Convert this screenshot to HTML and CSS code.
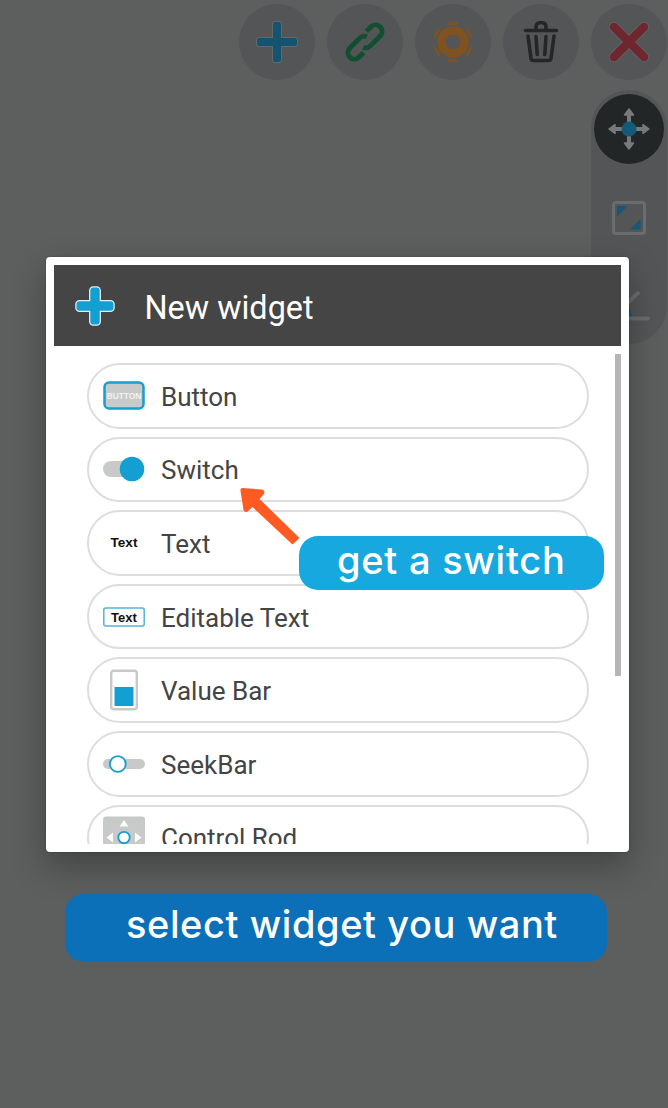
FILE: index.html
```html
<!DOCTYPE html>
<html lang="en">
<head>
<meta charset="utf-8">
<title>New widget</title>
<link rel="stylesheet" href="styles.css">
</head>
<body>
<main class="screen">
  <nav class="toolbar">
    <span class="tool"><svg width="44" height="44" viewBox="-22 -22 44 44"><path class="plus-halo" d="M-2-18H2V-2H18V2H2V18H-2V2H-18V-2H-2Z"/><path class="plus" d="M-2-18H2V-2H18V2H2V18H-2V2H-18V-2H-2Z"/></svg></span>
    <span class="tool"><svg width="44" height="44" viewBox="-22 -22 44 44"><g class="link" transform="rotate(-45)"><path id="chain" d="M8.500-6.500H15A6.500 6.500 0 0 1 15 6.500H1Q-3.500 6.500-5 2.500"/><use href="#chain" transform="rotate(180)"/></g></svg></span>
    <span class="tool"><svg width="44" height="44" viewBox="0 0 44 44"><g class="teeth"><path id="t" d="M17 2.200H27V4.700H17Z"/><use href="#t" transform="rotate(60 22 22)"/><use href="#t" transform="rotate(120 22 22)"/><use href="#t" transform="rotate(180 22 22)"/><use href="#t" transform="rotate(240 22 22)"/><use href="#t" transform="rotate(300 22 22)"/></g><circle class="gear" cx="22" cy="22" r="11.500"/></svg></span>
    <span class="tool"><svg width="44" height="44" viewBox="0 0 44 44"><g class="trash"><path d="M6.500 10.500H37.500M17 9.500V7Q17 2.500 22 2.500Q27 2.500 27 7V9.500M9 16L12 38.500Q12.300 40.500 14.500 40.500H29.500Q31.700 40.500 32 38.500L35 16M17 16.500L18.200 34.500M27 16.500L25.800 34.500"/></g></svg></span>
    <span class="tool"><svg width="44" height="44" viewBox="0 0 44 44"><path class="halo" d="M7 7L37 37M37 7L7 37"/><path class="cross" d="M7 7L37 37M37 7L7 37"/></svg></span>
  </nav>
  <aside class="side">
    <span class="mode"><svg width="44" height="44" viewBox="0 0 44 44"><path class="arms" d="M22 6V38M6 22H38"/><path class="heads" d="M22 2L26.500 8H17.500ZM22 42L26.500 36H17.500ZM2 22L8 17.500V26.500ZM42 22L36 17.500V26.500Z"/><circle class="blue" cx="22" cy="22" r="7.500"/></svg></span>
    <svg class="resize" width="34" height="34" viewBox="0 0 34 34"><rect class="frame" x="1.500" y="1.500" width="31" height="31" rx="2.500"/><path class="blue" d="M5 5H15.500L5 15.500ZM28.500 18V28.500H18Z"/></svg>
    <svg class="angle" width="44" height="34" viewBox="0 0 44 34"><path class="blue" d="M16 12Q24 18 25 28H12Z"/><path class="line" d="M31 4L4 29.500H41"/></svg>
  </aside>

  <section class="dialog">
    <header class="head">
      <svg width="42" height="42" viewBox="-21 -21 42 42"><path class="edge" d="M-1.700-15.500H1.700V-1.700H15.500V1.700H1.700V15.500H-1.700V1.700H-15.500V-1.700H-1.700Z"/><path class="bright" d="M-1.700-15.500H1.700V-1.700H15.500V1.700H1.700V15.500H-1.700V1.700H-15.500V-1.700H-1.700Z"/></svg>
      <h1>New widget</h1>
    </header>
    <div class="body">
      <ul class="list">
        <li><svg width="42" height="42" viewBox="0 0 42 42"><rect class="btn" x="1.500" y="7.500" width="39" height="26" rx="4.500"/><text class="btntext" x="21" y="23.700">BUTTON</text></svg><span>Button</span></li>
        <li><svg width="42" height="42" viewBox="0 0 42 42"><rect class="grey" y="13" width="38" height="16" rx="8"/><circle class="cyan" cx="29" cy="21" r="12.300"/></svg><span>Switch</span></li>
        <li><svg width="42" height="42" viewBox="0 0 42 42"><text class="label" x="21" y="24.500">Text</text></svg><span>Text</span></li>
        <li><svg width="42" height="42" viewBox="0 0 42 42"><rect class="field" x=".8" y="12" width="40.400" height="18" rx="2"/><text class="label small" x="21" y="26">Text</text></svg><span>Editable Text</span></li>
        <li><svg width="42" height="42" viewBox="0 0 42 42"><rect class="tank" x="8.200" y="1.700" width="25.600" height="38.500" rx="2.500"/><rect class="cyan" x="11.500" y="18" width="19" height="19"/></svg><span>Value Bar</span></li>
        <li><svg width="42" height="42" viewBox="0 0 42 42"><rect class="grey" y="16" width="42" height="10" rx="5"/><circle class="knob" cx="14.800" cy="21" r="7.900"/></svg><span>SeekBar</span></li>
        <li><svg width="42" height="42" viewBox="0 0 42 42"><rect class="grey" y=".5" width="42" height="41.500" rx="3"/><path class="white" d="M21 4L25.500 10.500H16.500ZM21 38.500L25.500 32H16.500ZM3.500 21.500L10 16.500V26.500ZM38.500 21.500L32 16.500V26.500Z"/><circle class="knob" cx="21" cy="21.500" r="5.700"/></svg><span>Control Rod</span></li>
      </ul>
      <i class="scroll"></i>
    </div>
  </section>

  <svg class="arrow" width="64" height="62" viewBox="0 0 64 62"><path d="M4.500 3L24 4.500Q27.500 5.500 26 9L21.500 14L61.500 53L54.500 59.500L14.500 22L9.500 26.500Q7 28 5.500 25L2.500 6Q2 3 4.500 3Z"/></svg>
  <div class="tip"><span>get a switch</span></div>
  <div class="caption"><span>select widget you want</span></div>
</main>
</body>
</html>
```

FILE: styles.css
```css
* { box-sizing: border-box; }
body { margin: 0; }
svg { display: block; flex: none; }
.screen { position: relative; width: 668px; height: 1108px; overflow: hidden; background: #5d5f5e; font-family: Roboto, sans-serif; }
.toolbar { display: flex; justify-content: flex-end; gap: 12px; padding: 4px 1px 0 0; }
.tool { width: 76px; height: 76px; border-radius: 50%; background: #535557; display: flex; align-items: center; justify-content: center; }
.tool path, .tool circle { fill: none; stroke-linecap: round; stroke-linejoin: round; }
.halo { stroke: #626769; stroke-width: 10; }
.tool .plus-halo { stroke: #626769; stroke-width: 6; }
.tool .plus { fill: #145470; stroke: #145470; stroke-width: 4; }
.tool .link path { stroke: #10502f; stroke-width: 4.8; stroke-linecap: butt; }
.tool .teeth path { fill: #805220; }
.tool .gear { stroke: #805220; stroke-width: 8.4; }
.trash path { stroke: #242627; stroke-width: 3.6; }
.cross { stroke: #6f262e; stroke-width: 8.6; }
.side { width: 76px; height: 254px; margin: 10px 1px 0 auto; padding-top: 4px; border-radius: 38px; background: #535557; display: flex; flex-direction: column; align-items: center; }
.mode { width: 70px; height: 70px; border-radius: 50%; background: #222626; display: flex; align-items: center; justify-content: center; }
.arms { stroke: #77797a; stroke-width: 4; }
.heads { fill: #77797a; stroke: #77797a; stroke-width: 1.5; stroke-linejoin: round; }
.blue { fill: #145a78; }
.resize { margin-top: 37px; }
.frame { fill: none; stroke: #6a6c6e; stroke-width: 3; }
.angle { margin-top: 54px; }
.line { fill: none; stroke: #6a6c6e; stroke-width: 4; stroke-linecap: round; stroke-linejoin: round; }
.dialog { position: absolute; left: 46px; top: 257px; width: 583px; height: 595px; padding: 8px; border-radius: 4px; background: #fff; box-shadow: 0 14px 34px rgba(0,0,0,.3), 0 0 2px rgba(0,0,0,.3); }
.head { height: 81px; padding-left: 20px; display: flex; align-items: center; background: #444544; color: #fff; }
.head h1 { margin: 0 0 0 28.5px; font-weight: 400; font-size: 32.4px; line-height: 40px; padding-top: 4px; }
.head path { stroke-linejoin: round; }
.edge { stroke: #e5f0f4; stroke-width: 8.5; }
.bright { fill: #149fd2; stroke: #149fd2; stroke-width: 6; }
.body { display: flex; justify-content: space-between; height: 498px; overflow: hidden; padding-top: 8px; }
.list { list-style: none; margin: 0; padding: 9px 0 0 33px; display: flex; flex-direction: column; gap: 8px; }
.list li { flex: none; width: 502px; height: 65.6px; border: 2px solid #ddd; border-radius: 33px; display: flex; align-items: center; gap: 16px; padding-left: 14px; color: #444; font-size: 26px; line-height: 32px; }
.list span { padding-top: 2px; }
.scroll { width: 6px; height: 322px; background: #b5b5b5; }
.btn { fill: #c8caca; stroke: #149fd2; stroke-width: 2.5; }
.btntext { fill: #f0f1f1; font: 700 8.4px "Liberation Sans", sans-serif; text-anchor: middle; }
.label { fill: #111; font: 700 13.6px "Liberation Sans", sans-serif; text-anchor: middle; }
.small { font-size: 13px; }
.grey { fill: #c8c9c9; }
.cyan { fill: #149fd2; }
.white { fill: #fff; }
.field { fill: #fff; stroke: #55b4dc; stroke-width: 1.5; }
.tank { fill: #fff; stroke: #c8c9c9; stroke-width: 2.4; }
.knob { fill: #fff; stroke: #149fd2; stroke-width: 1.8; }
.arrow { position: absolute; left: 238px; top: 485px; fill: #ff5a22; }
.tip, .caption { position: absolute; color: #fff; font-family: Inter, sans-serif; font-weight: 500; white-space: nowrap; }
.tip { left: 299px; top: 536px; width: 305px; height: 54px; border-radius: 19px; background: #16a8df; padding-left: 38px; font-size: 38px; line-height: 48px; letter-spacing: .75px; }
.caption { left: 65px; top: 894px; width: 542px; height: 68px; border-radius: 19px; background: #0b70b8; padding-left: 61px; font-size: 38px; line-height: 61px; letter-spacing: .58px; }
```
